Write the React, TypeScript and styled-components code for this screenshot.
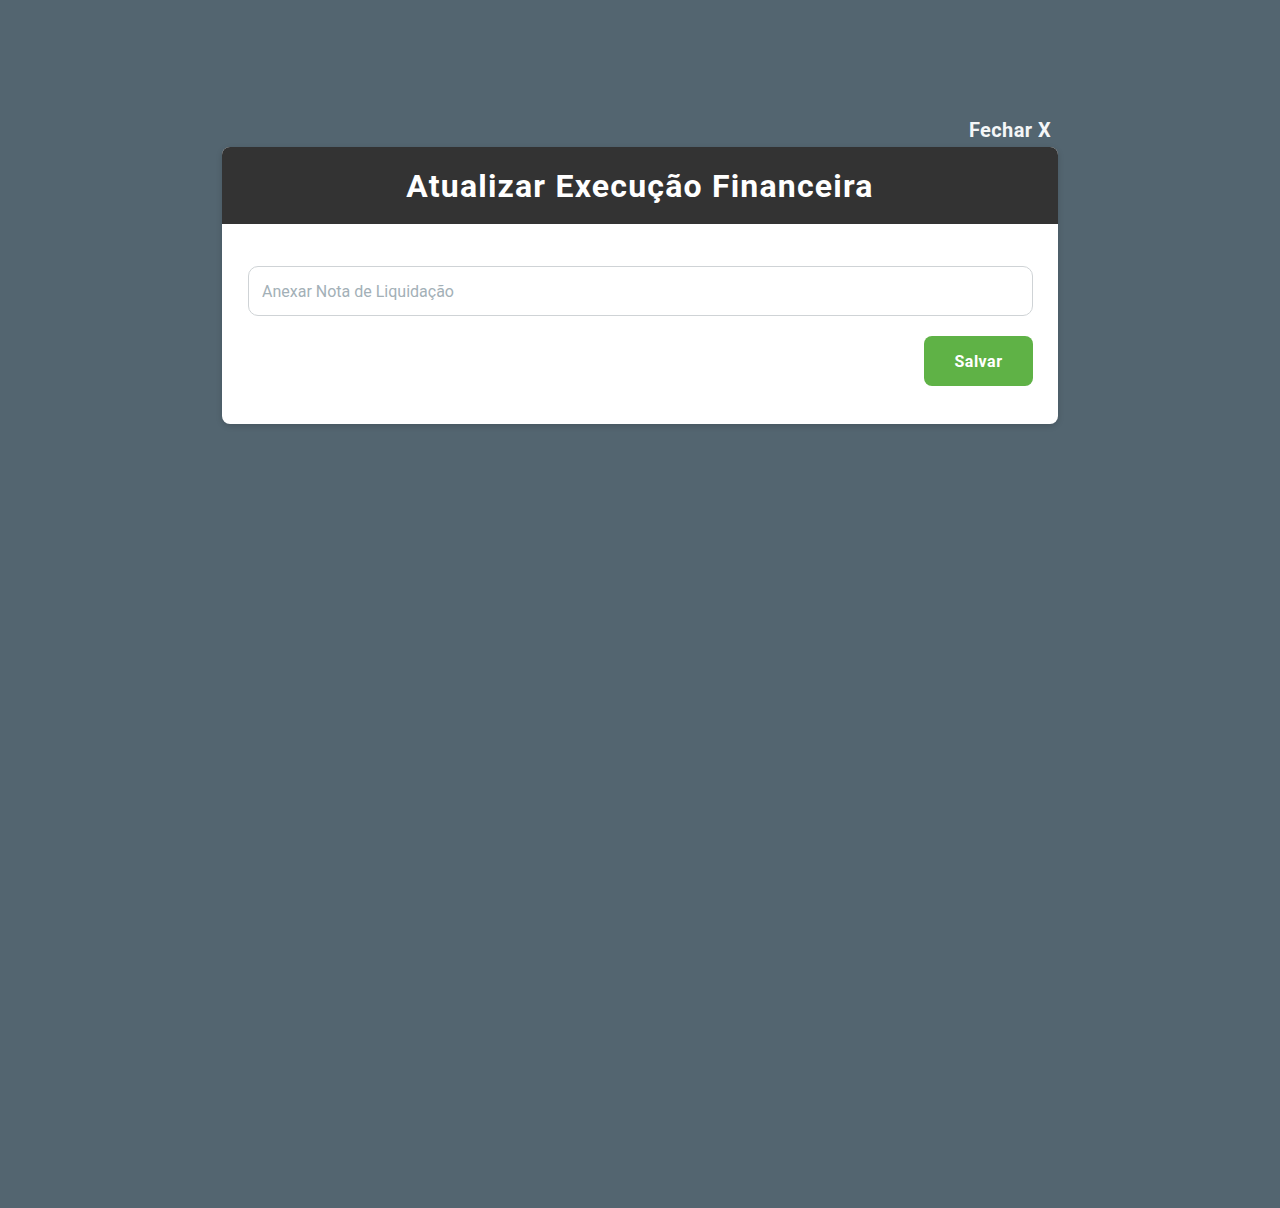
import styled, { createGlobalStyle } from "styled-components";

const GlobalStyle = createGlobalStyle`
  html, body {
    margin: 0;
    padding: 0;
    background: #536570;
    font-family: Roboto, "Noto Sans", Arial, sans-serif;
  }
  * { box-sizing: border-box; }
`;

const Page = styled.div`
  min-height: 1208px;
  background: #536570;
  padding-top: 113px;
  display: flex;
  justify-content: center;
`;

const Wrapper = styled.div`
  width: 836px;
  display: flex;
  flex-direction: column;
`;

const CloseButton = styled.button`
  align-self: flex-end;
  margin-right: 7px;
  background: none;
  border: none;
  padding: 0;
  height: 34px;
  color: #f4f6f7;
  font-family: inherit;
  font-weight: 700;
  font-size: 20px;
  line-height: 26px;
  letter-spacing: 0.4px;
  cursor: pointer;
`;

const Card = styled.div`
  background: #fff;
  border-radius: 8px;
  overflow: hidden;
  box-shadow: 0 2px 6px rgba(0, 0, 0, 0.15);
`;

const Header = styled.header`
  height: 77px;
  background: #333333;
  display: flex;
  align-items: center;
  justify-content: center;
`;

const Title = styled.h1`
  margin: 0;
  color: #fff;
  font-size: 32px;
  font-weight: 700;
  letter-spacing: 1.2px;
`;

const Body = styled.div`
  padding: 42px 25px 38px 26px;
  display: flex;
  flex-direction: column;
  gap: 20px;
`;

const Input = styled.input`
  height: 50px;
  width: 100%;
  border: 1px solid #cfd3d6;
  border-radius: 10px;
  padding: 0 13px;
  font-family: inherit;
  font-size: 16px;
  color: #333;
  outline: none;
  &::placeholder {
    color: #a3b0b7;
  }
`;

const Actions = styled.div`
  display: flex;
  justify-content: flex-end;
`;

const SaveButton = styled.button`
  width: 109px;
  height: 50px;
  border: none;
  border-radius: 8px;
  background: #5fb246;
  color: #fff;
  font-family: inherit;
  font-weight: 700;
  font-size: 16px;
  letter-spacing: 0.5px;
  cursor: pointer;
`;

export default function App() {
  return (
    <>
      <GlobalStyle />
      <Page>
        <Wrapper>
          <CloseButton>Fechar X</CloseButton>
          <Card>
            <Header>
              <Title>Atualizar Execução Financeira</Title>
            </Header>
            <Body>
              <Input placeholder="Anexar Nota de Liquidação" />
              <Actions>
                <SaveButton>Salvar</SaveButton>
              </Actions>
            </Body>
          </Card>
        </Wrapper>
      </Page>
    </>
  );
}
